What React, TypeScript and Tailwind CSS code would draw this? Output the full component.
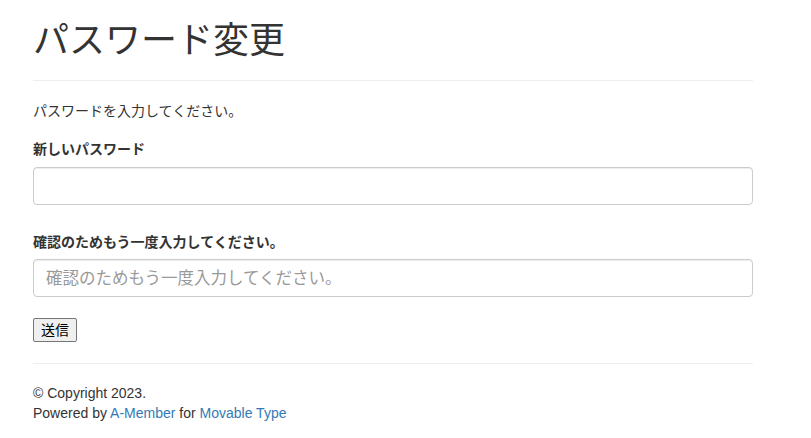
export default function App() {
  return (
    <main className="min-h-screen bg-white text-[#333] font-['Liberation_Sans','Noto_Sans_CJK_JP',sans-serif] text-[14px]">
      <div className="ml-[33px] w-[720px] pt-[21px]">
        <div className="border-b border-[#eee] pb-[19px]">
          <h1 className="text-[36px] leading-[40px] font-normal">パスワード変更</h1>
        </div>

        <p className="mt-[20px] leading-[20px]">パスワードを入力してください。</p>

        <form onSubmit={(e) => e.preventDefault()}>
          <label className="block mt-[18px] font-bold leading-[20px]">新しいパスワード</label>
          <input
            type="password"
            className="block mt-[8px] w-full h-[38px] px-[12px] rounded-[4px] border border-[#ccc] shadow-[inset_0_1px_1px_rgba(0,0,0,0.075)] outline-none"
          />

          <label className="block mt-[27px] font-bold leading-[20px]">確認のためもう一度入力してください。</label>
          <input
            type="password"
            placeholder="確認のためもう一度入力してください。"
            className="block mt-[7px] w-full h-[38px] px-[12px] rounded-[4px] border border-[#ccc] text-[16.5px] placeholder:text-[#999] shadow-[inset_0_1px_1px_rgba(0,0,0,0.075)] outline-none"
          />

          <button
            type="submit"
            className="block mt-[21px] h-[24px] px-[7px] bg-[#efefef] border border-[#767676] rounded-[2px] text-[14px] leading-[20px] text-black"
          >
            送信
          </button>
        </form>

        <hr className="mt-[21px] border-t border-[#eee]" />

        <footer className="mt-[19px] leading-[20px]">
          <p>© Copyright 2023.</p>
          <p>
            Powered by <a href="#" className="text-[#337ab7]">A-Member</a> for{" "}
            <a href="#" className="text-[#337ab7]">Movable Type</a>
          </p>
        </footer>
      </div>
    </main>
  )
}
